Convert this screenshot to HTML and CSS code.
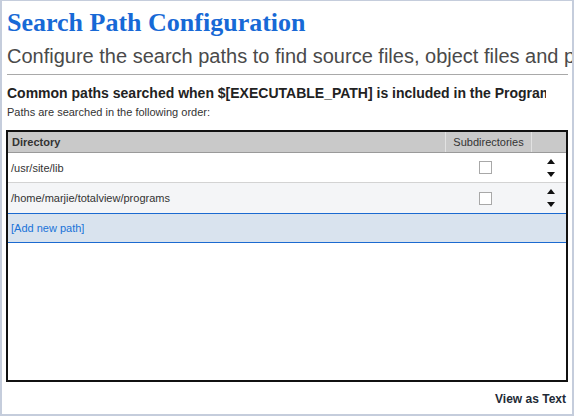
FILE: index.html
```html
<!DOCTYPE html>
<html>
<head>
<meta charset="utf-8">
<link rel="stylesheet" href="styles.css">
</head>
<body>
<div class="frame">
  <h1 class="title">Search Path Configuration</h1>
  <div class="subtitle">Configure the search paths to find source files, object files and programs.</div>
  <hr class="rule">
  <div class="section-head">Common paths searched when $[EXECUTABLE_PATH] is included in the Program search path</div>
  <div class="note">Paths are searched in the following order:</div>
  <div class="grid-box">
    <table class="paths">
      <thead>
        <tr>
          <th class="col-dir">Directory</th>
          <th class="col-sub">Subdirectories</th>
          <th class="col-ord"></th>
        </tr>
      </thead>
      <tbody>
        <tr class="row">
          <td class="cell-dir">/usr/site/lib</td>
          <td class="cell-sub"><span class="check"></span></td>
          <td class="cell-ord"><span class="arrows"><span class="up"></span><span class="down"></span></span></td>
        </tr>
        <tr class="row alt">
          <td class="cell-dir">/home/marjie/totalview/programs</td>
          <td class="cell-sub"><span class="check"></span></td>
          <td class="cell-ord"><span class="arrows"><span class="up"></span><span class="down"></span></span></td>
        </tr>
        <tr class="row add">
          <td class="cell-dir" colspan="3"><a class="add-link">[Add new path]</a></td>
        </tr>
      </tbody>
    </table>
  </div>
  <div class="footer"><span class="view-text">View as Text</span></div>
</div>
</body>
</html>
```

FILE: styles.css
```css
html, body {
  margin: 0;
  padding: 0;
  background: #ffffff;
}
.frame {
  box-sizing: border-box;
  width: 574px;
  height: 416px;
  border-style: solid;
  border-color: #c5cddc;
  border-width: 1px 2px 2px 2px;
  padding: 0 4px;
  overflow: hidden;
  font-family: "Liberation Sans", Arial, sans-serif;
}
.title {
  margin: 7px 0 0 1px;
  font-family: "Liberation Serif", "Times New Roman", serif;
  font-size: 26px;
  line-height: 30px;
  font-weight: bold;
  color: #1769d6;
  white-space: nowrap;
}
.subtitle {
  margin: 6px 0 0 1px;
  font-size: 20px;
  line-height: 24px;
  color: #4a4a4a;
  white-space: nowrap;
}
.rule {
  margin: 6px 0 0 1px;
  border: 0;
  border-top: 1px solid #a9a9a9;
  height: 0;
}
.section-head {
  margin: 10px 22px 0 1px;
  font-size: 14px;
  line-height: 16px;
  font-weight: bold;
  color: #222222;
  white-space: nowrap;
  overflow: hidden;
}
.note {
  margin: 5px 0 0 1px;
  font-size: 11px;
  line-height: 13px;
  color: #333333;
}
.grid-box {
  margin-top: 11px;
  height: 252px;
  border: 2px solid #111111;
  box-sizing: border-box;
  background: #ffffff;
}
.paths {
  width: 100%;
  border-collapse: collapse;
  font-size: 11px;
  color: #333333;
}
.paths th {
  height: 20px;
  padding: 0 4px;
  background: #c9c9c9;
  border-bottom: 1px solid #9a9a9a;
  text-align: left;
  line-height: 19px;
  font-size: 11px;
}
.col-dir {
  font-weight: bold;
}
.paths .col-sub {
  width: 77px;
  font-weight: normal;
  text-align: center;
  border-left: 1px solid #e2e2e2;
}
.paths .col-ord {
  width: 26px;
  border-left: 1px solid #e2e2e2;
}
.row td {
  height: 29px;
  border-bottom: 1px solid #d3d3d3;
  padding: 0 3px;
  vertical-align: middle;
}
.row.alt td {
  height: 30px;
  background: #f4f5f7;
  border-bottom: 1px solid #1b6ad0;
}
.row.add td {
  height: 28px;
  background: #d9e3ee;
  border-bottom: 1px solid #1b6ad0;
}
.cell-sub {
  text-align: center;
}
.check {
  display: inline-block;
  width: 11px;
  height: 11px;
  border: 1px solid #a8a8a8;
  background: #ffffff;
  vertical-align: middle;
  margin-right: 7px;
}
.cell-ord {
  text-align: center;
}
.arrows {
  display: inline-flex;
  flex-direction: column;
  align-items: center;
  gap: 8px;
  vertical-align: middle;
  margin-left: 4px;
}
.up {
  width: 0;
  height: 0;
  border-left: 4px solid transparent;
  border-right: 4px solid transparent;
  border-bottom: 5px solid #111111;
}
.down {
  width: 0;
  height: 0;
  border-left: 4px solid transparent;
  border-right: 4px solid transparent;
  border-top: 5px solid #111111;
}
.add-link {
  color: #1a73d9;
}
.footer {
  display: flex;
  justify-content: flex-end;
  padding-right: 2px;
  margin-top: 10px;
}
.view-text {
  font-size: 12px;
  line-height: 14px;
  font-weight: bold;
  color: #222a36;
}
```
